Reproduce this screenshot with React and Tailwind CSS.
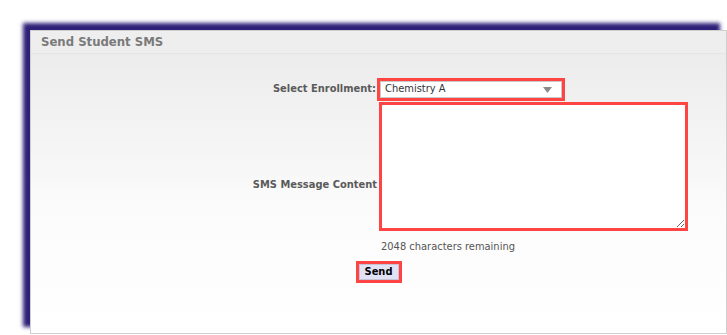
const SelectBox = ({ value }) => {
    return (
        <div className="h-[23px] w-[188px] border-[3px] border-[#ff4444]">
            <div className="flex h-full items-center justify-between border border-[#c8c8c8] bg-white pl-[4px] pr-[9px] text-[11px] text-[#333]">
                <span>{value}</span>
                <svg width="9" height="6" viewBox="0 0 9 6">
                    <polygon points="0,0 9,0 4.5,6" fill="#8a8a8a" />
                </svg>
            </div>
        </div>
    );
};

const App = () => {
    return (
        <div
            className="h-[335px] w-[727px] overflow-hidden bg-white pl-[30px] pt-[30px]"
            style={{ fontFamily: "'DejaVu Sans Condensed', 'DejaVu Sans', sans-serif" }}
        >
            <div className="h-[304px] w-[697px] border border-[#cfcfcf] bg-white shadow-[-7px_-7px_4px_#2e2078]">
                <div className="h-[23px] border-b border-[#e4e4e4] bg-[#eeeeee] px-[10px] text-[13px] font-bold leading-[21px] text-[#7a7a7a]">
                    Send Student SMS
                </div>

                <div className="h-[279px] bg-gradient-to-b from-[#ececec] via-[#fbfbfb] via-55% to-white pt-[24px]">
                    <div className="grid grid-cols-[346px_auto]">
                        <label className="self-center pr-[1px] text-right text-[11px] font-bold text-[#5a5a5a]">
                            Select Enrollment:
                        </label>
                        <SelectBox value="Chemistry A" />

                        <label className="mt-[77px] self-start text-right text-[11px] font-bold leading-[13px] text-[#5a5a5a]">
                            SMS Message Content
                        </label>
                        <textarea className="ml-[2px] mt-[1px] h-[129px] w-[309px] border-[3px] border-[#ff4444] bg-white text-[11px] outline-none" />

                        <div />
                        <div className="ml-[4px] mt-[9px] text-[11px] leading-[13px] text-[#555]">
                            2048 characters remaining
                        </div>
                    </div>

                    <div className="mt-[8px] flex justify-center">
                        <div className="flex h-[22px] w-[46px] border-[3px] border-[#ff4444]">
                            <button className="h-full w-full border border-[#c4c4d4] bg-[#e2e2f6] p-0 text-[11px] font-bold leading-[12px] text-black">
                                Send
                            </button>
                        </div>
                    </div>
                </div>
            </div>
        </div>
    );
};

export default App;
